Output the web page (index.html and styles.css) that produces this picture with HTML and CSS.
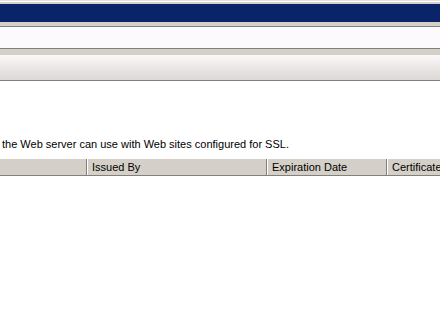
FILE: index.html
```html
<!DOCTYPE html>
<html lang="en">
<head>
    <meta charset="UTF-8">
    <title>Server Certificates</title>
    <link rel="stylesheet" href="styles.css">
</head>
<body>
    <div class="window">
        <div class="top-edge"></div>
        <div class="title-bar"></div>
        <div class="menu-gap"></div>
        <div class="address-bar"></div>
        <div class="tool-gap"></div>
        <div class="feature-bar"></div>
        <div class="content">
            <p class="description">the Web server can use with Web sites configured for SSL.</p>
            <div class="list-header">
                <div class="col col-name"></div>
                <div class="col col-issued">Issued By</div>
                <div class="col col-expires">Expiration Date</div>
                <div class="col col-hash">Certificate</div>
            </div>
        </div>
    </div>
</body>
</html>
```

FILE: styles.css
```css
body {
    margin: 0;
    padding: 0;
    background-color: #fff;
    font-family: Tahoma, "Liberation Sans", sans-serif;
    font-size: 11px;
    overflow: hidden;
}
.window {
    width: 440px;
    height: 311px;
    display: flex;
    flex-direction: column;
}
.top-edge {
    height: 4px;
    background: linear-gradient(#e4e2dc 0 1px, #fff 1px 2px, #d4d0c8 2px);
}
.title-bar {
    height: 18px;
    background-color: #0a246a;
}
.menu-gap {
    height: 4px;
    background-color: #d4d0c8;
    border-bottom: 1px solid #808080;
}
.address-bar {
    height: 21px;
    background-color: #fdfafd;
    border-bottom: 1px solid #808080;
}
.tool-gap {
    height: 6px;
    background-color: #d4d0c8;
}
.feature-bar {
    height: 25px;
    background: linear-gradient(#fbf8f8, #e8e4e4 60%, #dcd8d6);
    border-bottom: 1px solid #808080;
}
.content {
    flex: 1;
    background-color: #fff;
}
.description {
    margin: 57px 0 0 2px;
    line-height: 13px;
    color: #000;
}
.list-header {
    margin-top: 7px;
    display: flex;
    height: 16px;
    background-color: #d4d0c8;
    border-top: 1px solid #fff;
    border-bottom: 1px solid #808080;
}
.col {
    box-sizing: border-box;
    padding-left: 4px;
    line-height: 17px;
    white-space: nowrap;
    overflow: hidden;
    border-left: 1px solid #fff;
    border-right: 1px solid #808080;
}
.col-name {
    width: 87px;
    border-left: none;
}
.col-issued {
    width: 180px;
}
.col-expires {
    width: 120px;
}
.col-hash {
    flex: 1;
    border-right: none;
}
```
